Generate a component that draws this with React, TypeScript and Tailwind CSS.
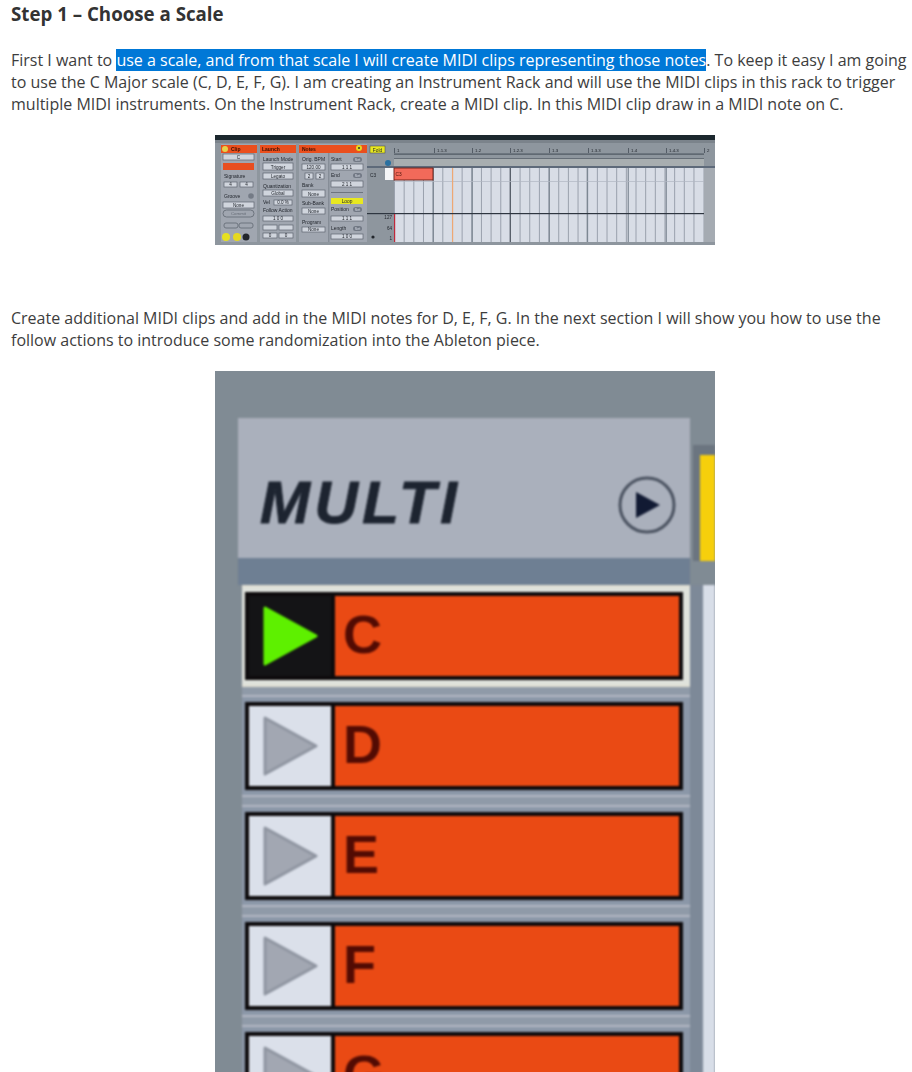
import React from 'react';

const labels: [string, number, number][] = [
  ['Signature', 9, 43], ['Groove', 9, 63], ['Launch Mode', 48, 26], ['Quantization', 48, 52.5], ['Vel', 48, 69],
  ['Follow Action', 48, 77], ['Orig. BPM', 87, 26], ['Bank', 87, 52], ['Sub-Bank', 87, 70], ['Program', 87, 89],
  ['Start', 116, 26], ['End', 116, 42], ['Position', 116, 76], ['Length', 116, 95],
];

const fields: [number, number, number, number, string][] = [
  [8, 19, 31, 6, 'C'], [9, 47, 13, 5, '4'], [25, 47, 13, 5, '4'], [8, 67, 31, 6, 'None'],
  [48, 28, 30, 7, 'Trigger'], [48, 38, 30, 6, 'Legato'], [48, 55, 30, 6, 'Global'], [59, 65, 18, 5, '0.0 %'],
  [48, 81, 30, 5, '1 0 0'], [48, 90, 14, 5, ''], [64, 90, 14, 5, ''], [48, 98, 14, 5, '0'], [64, 98, 14, 5, '0'],
  [87, 29, 23, 6, '120.00'], [90, 38, 8, 6, '2'], [101, 38, 8, 6, '2'], [87, 55, 23, 7, 'None'], [87, 73, 23, 6, 'None'], [87, 92, 23, 5, 'None'],
  [116, 29, 32, 6, '1 1 1'], [116, 46, 32, 6, '2 1 1'], [116, 81, 32, 5, '1 1 1'], [116, 99, 32, 5, '1 0 0'],
];

const rulerMarks: [string, number][] = [
  ['1', 182], ['1.1.3', 222], ['1.2', 260], ['1.2.3', 298], ['1.3', 337], ['1.3.3', 376], ['1.4', 416], ['1.4.3', 454], ['2', 492],
];

const ClipViewPicture = () => {
  const minor = Array.from({ length: 32 }, (_, i) => 179 + i * 9.66);
  const major = [218, 257, 295, 334, 372, 413, 451, 489];
  return (
    <div className="w-[500px] h-[110px] overflow-hidden bg-[#8e969e]">
      <svg width="500" height="110" viewBox="0 0 500 110" className="block blur-[0.55px]" fontFamily="'Liberation Sans', sans-serif" fontSize="5" fill="#23272e">
        <rect width="500" height="110" fill="#8e969e" />
        <rect y="-3" width="500" height="8" fill="#1c282e" />
        <rect y="5" width="500" height="3" fill="#7b838b" />
        <rect x="6" y="9" width="36" height="98" fill="#a0a6b0" />
        <rect x="45" y="9" width="36" height="98" fill="#a0a6b0" />
        <rect x="84" y="9" width="68" height="98" fill="#a0a6b0" />
        <rect x="113" y="18" width="1.5" height="89" fill="#868d97" />
        <rect x="6" y="10" width="36" height="8" fill="#ea4f1e" />
        <rect x="45" y="10" width="36" height="8" fill="#ea4f1e" />
        <rect x="84" y="10" width="68" height="8" fill="#ea4f1e" />
        <circle cx="10" cy="14" r="3" fill="#e6d24a" />
        <circle cx="144" cy="13" r="3" fill="#e6d820" />
        <circle cx="144" cy="13" r="1" fill="#333" />
        <text x="16" y="16" fontWeight="700" fill="#3a0f03">Clip</text>
        <text x="47" y="16" fontWeight="700" fill="#3a0f03">Launch</text>
        <text x="87" y="16" fontWeight="700" fill="#3a0f03">Notes</text>
        <rect x="8" y="28" width="31" height="7" fill="#e84e20" />
        {labels.map(([t, x, y]) => <text key={t} x={x} y={y}>{t}</text>)}
        {fields.map(([x, y, w, h, t], i) => (
          <g key={i}>
            <rect x={x} y={y} width={w} height={h} fill="#d0d5dd" stroke="#5f6670" strokeWidth="0.7" />
            <text x={x + w / 2} y={y + h - 1.2} textAnchor="middle" fontSize="4.6">{t}</text>
          </g>
        ))}
        <circle cx="36" cy="61" r="2.8" fill="#747b86" />
        <rect x="8" y="75" width="31" height="7" rx="3.5" fill="#a0a6b0" stroke="#6d747e" />
        <text x="23.5" y="80" textAnchor="middle" fontSize="4.4" fill="#666d77">Commit</text>
        <rect x="9" y="88" width="14" height="5" rx="2" fill="#a0a6b0" stroke="#6d747e" />
        <rect x="24" y="88" width="14" height="5" rx="2" fill="#a0a6b0" stroke="#6d747e" />
        <circle cx="11" cy="102" r="4" fill="#e6e020" />
        <circle cx="22" cy="102" r="4" fill="#e6d820" />
        <circle cx="31" cy="102" r="3.5" fill="#22262c" />
        <rect x="116" y="63" width="32" height="6" fill="#e8e820" />
        <text x="132" y="68" textAnchor="middle" fontSize="4.8">Loop</text>
        <rect x="116" y="57" width="32" height="1" fill="#6d747e" />
        {[[138, 22], [138, 38], [138, 72], [138, 91]].map(([x, y]) => (
          <g key={y}>
            <rect x={x} y={y} width="9" height="5" rx="2.5" fill="#727985" />
            <text x={x + 4.5} y={y + 4} textAnchor="middle" fontSize="3.6" fill="#d8dde6">Set</text>
          </g>
        ))}
        <rect x="155" y="11" width="15" height="7" fill="#e8e820" stroke="#444" strokeWidth="0.5" />
        <text x="162.5" y="16.5" textAnchor="middle" fontSize="4.8">Fold</text>
        <circle cx="173" cy="28" r="3" fill="#2a70a0" />
        <text x="155" y="42" fontSize="4.8">C3</text>
        <rect x="170" y="33" width="9" height="12" fill="#f4f5f7" />
        <rect x="179" y="24" width="310" height="7" fill="#a8aeb0" />
        <rect x="179" y="18.5" width="310" height="1.2" fill="#4d5660" />
        <rect x="179" y="23" width="310" height="1" fill="#666e77" />
        <rect x="152" y="31" width="348" height="2" fill="#5e6a7a" />
        <rect x="179" y="33" width="310" height="74" fill="#d8dde6" />
        {minor.map((x) => <rect key={x} x={x} y="33" width="1" height="74" fill="#9aa1ad" />)}
        {major.map((x) => <rect key={x} x={x - 0.3} y="33" width="1" height="74" fill={x === 295 ? '#3c444e' : '#6d7884'} />)}
        <rect x="179" y="46" width="310" height="0.7" fill="#b0b7c2" />
        <rect x="237" y="33" width="1.2" height="74" fill="#eea874" />
        <rect x="179" y="33" width="39" height="12" fill="#f26a5a" stroke="#6a1e14" strokeWidth="0.9" />
        <text x="180.5" y="41" fontSize="4.8" fill="#4a140b">C3</text>
        <rect x="152" y="78" width="348" height="1.2" fill="#2e3640" />
        <rect x="489" y="33" width="11" height="74" fill="#a5abb2" />
        <rect x="179" y="79" width="1.2" height="28" fill="#c0283a" />
        <text x="177" y="84" textAnchor="end" fontSize="4.6">127</text>
        <text x="177" y="95" textAnchor="end" fontSize="4.6">64</text>
        <text x="177" y="105" textAnchor="end" fontSize="4.6">1</text>
        <circle cx="158" cy="102" r="1.6" fill="#22262c" />
        <rect y="107" width="500" height="6" fill="#8e969e" />
        {rulerMarks.map(([t, x]) => (
          <g key={t}>
            <text x={x} y="17" fontSize="4.4">{t}</text>
            <rect x={x - 3} y="13" width="0.7" height="5" fill="#3c444e" />
          </g>
        ))}
      </svg>
    </div>
  );
};

const Triangle = ({ fill, stroke }: { fill: string; stroke: string }) => (
  <svg width="55" height="60" viewBox="0 0 55 60" className="block">
    <polygon points="2,2 53,30 2,58" fill={fill} stroke={stroke} strokeWidth="3" strokeLinejoin="round" />
  </svg>
);

const ClipRow = ({ note, active }: { note: string; active?: boolean }) => (
  <div className={`pl-[3px] pr-[7px] py-[5px] border-y-2 ${active ? 'bg-[#dfe2dc] border-[#e0ded2]' : 'bg-[#8b97a8] border-[#b3b8c4]'}`}>
    <div className="flex h-[88px] border-[4px] border-[#0d0a0c] bg-[#ea4a14]">
      <div className={`w-[86px] pl-[14px] flex items-center border-r-[4px] border-[#0d0a0c] ${active ? 'bg-[#141416]' : 'bg-[#dbe0ea]'}`}>
        {active ? <Triangle fill="#5ef000" stroke="#5ef000" /> : <Triangle fill="#a2a7b2" stroke="#8f95a1" />}
      </div>
      <span className="pl-[8px] text-[54px] leading-[76px] font-bold text-[#520b03] font-['Liberation_Sans',sans-serif]">{note}</span>
    </div>
  </div>
);

const MultiPicture = () => (
  <div className="w-[500px] h-[720px] overflow-hidden bg-[#808b94]">
    <div className="blur-[1px]">
      <div className="flex items-start h-[187px] pl-[23px] pt-[47px]">
        <div className="w-[452px] h-[140px] shrink-0 bg-[#aab0bc] flex items-center justify-between pl-[22px] pr-[13px] pt-[30px]">
          <span className="text-[60px] leading-none font-bold italic tracking-[4.5px] text-[#1d2430] [-webkit-text-stroke:1px_#1d2430] font-['Liberation_Sans',sans-serif]">MULTI</span>
          <svg width="60" height="60" viewBox="0 0 60 60" className="block mt-[4px]">
            <circle cx="30" cy="30" r="27" fill="none" stroke="#4a5260" strokeWidth="3" />
            <polygon points="19,17 43,30 19,43" fill="#111a33" />
          </svg>
        </div>
        <div className="relative ml-[3px] mt-[27px] w-[22px] h-[116px] shrink-0 bg-[#6b7580] pl-[7px] pt-[10px]">
          <div className="h-[106px] bg-[#f6cf0c]" />
        </div>
      </div>
      <div className="h-[27px] bg-[#6e7f93] ml-[23px] mr-[25px]" />
      <div className="flex">
        <div className="w-[27px] shrink-0" />
        <div className="w-[448px] shrink-0 flex flex-col gap-[8px] bg-[#8f9aa8]">
          <ClipRow note="C" active />
          <ClipRow note="D" />
          <ClipRow note="E" />
          <ClipRow note="F" />
          <ClipRow note="G" />
        </div>
        <div className="w-[13px] shrink-0 bg-[#7d8998]" />
        <div className="w-[12px] shrink-0 bg-[#d8dee8]" />
      </div>
    </div>
  </div>
);

export default function App() {
  return (
    <div className="h-[1072px] overflow-hidden bg-white pl-[11px] text-[16px] leading-[22px] text-[#3d3d3d] font-['Open_Sans',sans-serif]">
      <h3 className="h-[28px] text-[18.72px] leading-[28px] font-bold text-[#333333]">Step 1 – Choose a Scale</h3>
      <p className="mt-[21px] w-[899px]">
        First I want to <span className="bg-[#0078d7] text-white">use a scale, and from that scale I will create MIDI clips representing those notes</span>. To keep it easy I am going to use the C Major scale (C, D, E, F, G). I am creating an Instrument Rack and will use the MIDI clips in this rack to trigger multiple MIDI instruments. On the Instrument Rack, create a MIDI clip. In this MIDI clip draw in a MIDI note on C.
      </p>
      <div className="mt-[20px] pl-[204px]">
        <ClipViewPicture />
      </div>
      <p className="mt-[62px] w-[899px]">
        Create additional MIDI clips and add in the MIDI notes for D, E, F, G. In the next section I will show you how to use the follow actions to introduce some randomization into the Ableton piece.
      </p>
      <div className="mt-[20px] pl-[204px]">
        <MultiPicture />
      </div>
    </div>
  );
}
